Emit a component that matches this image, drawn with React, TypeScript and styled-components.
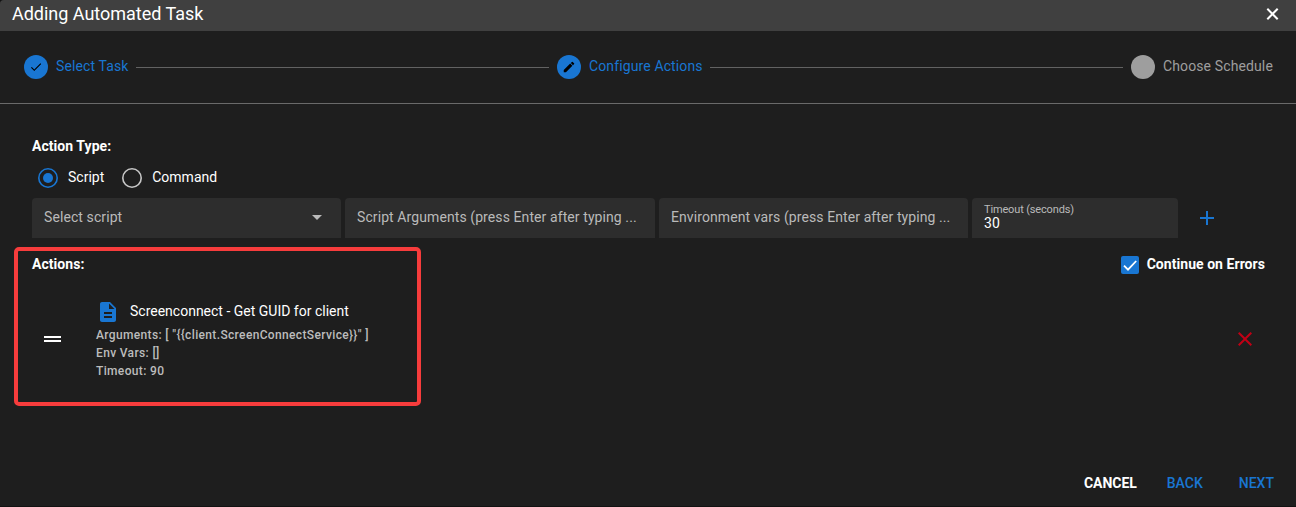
import React from "react";
import styled, { createGlobalStyle } from "styled-components";

const blue = "#1976d2";

const GlobalStyle = createGlobalStyle`
  *, *::before, *::after { box-sizing: border-box; }
  body { margin: 0; background: #121212; font-family: Roboto, sans-serif; font-size: 14px; color: #fff; }
  svg { display: block; flex: none; }
`;

const Dialog = styled.main`
  display: flex;
  flex-direction: column;
  height: 506px;
  background: #1e1e1e;
  border-radius: 4px 0 0 0;
  overflow: hidden;
`;

const TitleBar = styled.header`
  display: flex;
  align-items: center;
  justify-content: space-between;
  flex: none;
  height: 31px;
  padding: 0 15px 3px 12px;
  background: #404040;
`;

const Title = styled.h1`
  margin: 0;
  font-size: 18px;
  font-weight: 400;
  line-height: 28px;
  letter-spacing: -0.02px;
`;

const IconButton = styled.button`
  display: flex;
  padding: 0;
  border: 0;
  background: none;
  color: inherit;
`;

const Stepper = styled.nav`
  display: flex;
  align-items: center;
  flex: none;
  height: 73px;
  padding: 0 23px 0 24px;
  border-bottom: 1px solid #6a6a6a;
`;

const StepDot = styled.span<{ $active: boolean }>`
  display: flex;
  align-items: center;
  justify-content: center;
  flex: none;
  width: 24px;
  height: 24px;
  border-radius: 50%;
  background: ${(p) => (p.$active ? blue : "#9e9e9e")};
  color: #000;
`;

const StepLabel = styled.span<{ $active: boolean; $width: number }>`
  width: ${(p) => p.$width}px;
  margin-left: 8px;
  padding-bottom: 2px;
  white-space: nowrap;
  letter-spacing: 0.12px;
  color: ${(p) => (p.$active ? blue : "#9e9e9e")};
`;

const StepLine = styled.span`
  flex: 1;
  height: 1px;
  margin: 1px 8px 0 7px;
  background: #626262;
`;

const Content = styled.section`
  flex: 1;
  padding: 32px 32px 0;
`;

const Heading = styled.h2`
  margin: 0;
  font-size: 14px;
  font-weight: 700;
  line-height: 20px;
  letter-spacing: 0.05px;
`;

const RadioRow = styled.div`
  display: flex;
  align-items: center;
  gap: 18px;
  height: 42px;
  padding: 2px 0 0 6px;
`;

const Radio = styled.label`
  display: flex;
  align-items: center;
  gap: 10px;
  line-height: 20px;
`;

const RadioText = styled.span`
  padding-bottom: 2px;
`;

const RadioMark = styled.span<{ $checked?: boolean }>`
  display: flex;
  align-items: center;
  justify-content: center;
  width: 20px;
  height: 20px;
  border-radius: 50%;
  box-shadow: inset 0 0 0 1.6px ${(p) => (p.$checked ? blue : "#c7c7c7")};

  &::after {
    content: "";
    width: 10px;
    height: 10px;
    border-radius: 50%;
    background: ${(p) => (p.$checked ? blue : "transparent")};
  }
`;

const FieldRow = styled.div`
  display: grid;
  grid-template-columns: 309px 310px 309px 206px 50px;
  gap: 4px;
  height: 40px;
`;

const Field = styled.div`
  display: flex;
  align-items: center;
  justify-content: space-between;
  padding: 0 12px 2px;
  border-radius: 4px 4px 0 0;
  background: #2d2d2d;
  color: #bababa;
  white-space: nowrap;
  letter-spacing: 0.09px;
`;

const StackedField = styled(Field)`
  flex-direction: column;
  align-items: flex-start;
  justify-content: flex-start;
  padding-top: 5px;
`;

const FieldLabel = styled.span`
  font-size: 11px;
  line-height: 13px;
  letter-spacing: -0.15px;
`;

const FieldValue = styled.span`
  line-height: 15px;
  color: #fff;
`;

const AddButton = styled(IconButton)`
  align-items: center;
  justify-content: center;
  color: ${blue};
`;

const ActionsHeader = styled.div`
  display: flex;
  align-items: flex-start;
  justify-content: space-between;
  margin-top: 16px;
  margin-right: -1px;
`;

const CheckLabel = styled.label`
  display: flex;
  align-items: center;
  gap: 8px;
  height: 22px;
  font-weight: 700;
  letter-spacing: 0.05px;
`;

const CheckText = styled.span`
  padding-bottom: 3px;
`;

const CheckBox = styled.span`
  display: flex;
  align-items: center;
  justify-content: center;
  width: 18px;
  height: 18px;
  border-radius: 2px;
  background: ${blue};
`;

const ActionItem = styled.article`
  display: flex;
  align-items: center;
  height: 90px;
  margin-top: 18px;
  padding: 0 7px 0 12px;
`;

const ActionBody = styled.div`
  flex: 1;
  margin-left: 35px;
  padding-top: 2px;
`;

const ActionName = styled.div`
  display: flex;
  align-items: center;
  gap: 10px;
  height: 26px;
  padding-bottom: 2px;
  white-space: nowrap;
`;

const ActionTitle = styled.span`
  padding-bottom: 2px;
`;

const ActionDetail = styled.div`
  font-size: 12px;
  font-weight: 500;
  line-height: 18px;
  letter-spacing: 0.35px;
  color: #bcbcbc;
`;

const DeleteButton = styled(IconButton)`
  color: #c10015;
`;

const Footer = styled.footer`
  display: flex;
  justify-content: flex-end;
  padding: 0 22px 13px 0;
`;

const TextButton = styled.button<{ $primary?: boolean; $gap: number }>`
  margin: 0 0 0 ${(p) => p.$gap}px;
  padding: 0;
  border: 0;
  background: none;
  font: ${(p) => (p.$primary ? 500 : 700)} 14px/20px Roboto, sans-serif;
  letter-spacing: ${(p) => (p.$primary ? 0 : -0.05)}px;
  color: ${(p) => (p.$primary ? blue : "#fff")};
`;

const Highlight = styled.div`
  position: absolute;
  top: 247px;
  left: 14px;
  width: 407px;
  height: 159px;
  border: 4px solid #f73c3c;
  border-radius: 5px;
  pointer-events: none;
`;

const icons = {
  check: "M9 16.17L4.83 12l-1.42 1.41L9 19 21 7l-1.41-1.41z",
  edit: "M3 17.25V21h3.75L17.81 9.94l-3.75-3.75L3 17.25zM20.71 7.04a.996.996 0 0 0 0-1.41l-2.34-2.34a.996.996 0 0 0-1.41 0l-1.83 1.83 3.75 3.75 1.83-1.83z",
  close: "M19 6.41L17.59 5 12 10.59 6.41 5 5 6.41 10.59 12 5 17.59 6.41 19 12 13.41 17.59 19 19 17.59 13.41 12z",
  caret: "M7 10l5 5 5-5z",
  add: "M19 13h-6v6h-2v-6H5v-2h6V5h2v6h6v2z",
  file: "M14 2H6c-1.1 0-1.99.9-1.99 2L4 20c0 1.1.89 2 1.99 2H18c1.1 0 2-.9 2-2V8l-6-6zm2 16H8v-2h8v2zm0-4H8v-2h8v2zm-3-5V3.5L18.5 9H13z",
};

function Icon({ name, size, color = "currentColor" }: { name: keyof typeof icons; size: number; color?: string }) {
  return (
    <svg width={size} height={size} viewBox="0 0 24 24" fill={color} aria-hidden="true">
      <path d={icons[name]} />
    </svg>
  );
}

export default function App() {
  return (
    <>
      <GlobalStyle />
      <Dialog>
        <TitleBar>
          <Title>Adding Automated Task</Title>
          <IconButton aria-label="Close">
            <svg width="17" height="17" viewBox="0 0 17 17" fill="none" stroke="#fff" strokeWidth="2">
              <path d="M3.3 2.8l10.4 10.4M13.7 2.8L3.3 13.2" />
            </svg>
          </IconButton>
        </TitleBar>

        <Stepper>
          <StepDot $active><Icon name="check" size={14} /></StepDot>
          <StepLabel $active $width={73}>Select Task</StepLabel>
          <StepLine />
          <StepDot $active><Icon name="edit" size={14} /></StepDot>
          <StepLabel $active $width={114}>Configure Actions</StepLabel>
          <StepLine />
          <StepDot $active={false} />
          <StepLabel $active={false} $width={110}>Choose Schedule</StepLabel>
        </Stepper>

        <Content>
          <Heading>Action Type:</Heading>
          <RadioRow>
            <Radio><RadioMark $checked /><RadioText>Script</RadioText></Radio>
            <Radio><RadioMark /><RadioText>Command</RadioText></Radio>
          </RadioRow>
          <FieldRow>
            <Field>
              Select script
              <Icon name="caret" size={24} />
            </Field>
            <Field>Script Arguments (press Enter after typing ...</Field>
            <Field>Environment vars (press Enter after typing ...</Field>
            <StackedField>
              <FieldLabel>Timeout (seconds)</FieldLabel>
              <FieldValue>30</FieldValue>
            </StackedField>
            <AddButton aria-label="Add action"><Icon name="add" size={24} /></AddButton>
          </FieldRow>

          <ActionsHeader>
            <Heading>Actions:</Heading>
            <CheckLabel>
              <CheckBox>
                <svg width="18" height="18" viewBox="0 0 18 18" fill="none" stroke="#fff" strokeWidth="1.8">
                  <path d="M3 9.6l4 4L15.2 5" />
                </svg>
              </CheckBox>
              <CheckText>Continue on Errors</CheckText>
            </CheckLabel>
          </ActionsHeader>

          <ActionItem>
            <svg width="17" height="6" viewBox="0 0 17 6" fill="#fff" aria-hidden="true">
              <path d="M0 0h17v2H0zM0 4h17v2H0z" />
            </svg>
            <ActionBody>
              <ActionName>
                <Icon name="file" size={24} color={blue} />
                <ActionTitle>Screenconnect - Get GUID for client</ActionTitle>
              </ActionName>
              <ActionDetail>{'Arguments: [ "{{client.ScreenConnectService}}" ]'}</ActionDetail>
              <ActionDetail>Env Vars: []</ActionDetail>
              <ActionDetail>Timeout: 90</ActionDetail>
            </ActionBody>
            <DeleteButton aria-label="Delete action">
              <Icon name="close" size={24} />
            </DeleteButton>
          </ActionItem>
        </Content>

        <Footer>
          <TextButton $gap={0}>CANCEL</TextButton>
          <TextButton $primary $gap={30}>BACK</TextButton>
          <TextButton $primary $gap={36}>NEXT</TextButton>
        </Footer>
      </Dialog>
      <Highlight />
    </>
  );
}
